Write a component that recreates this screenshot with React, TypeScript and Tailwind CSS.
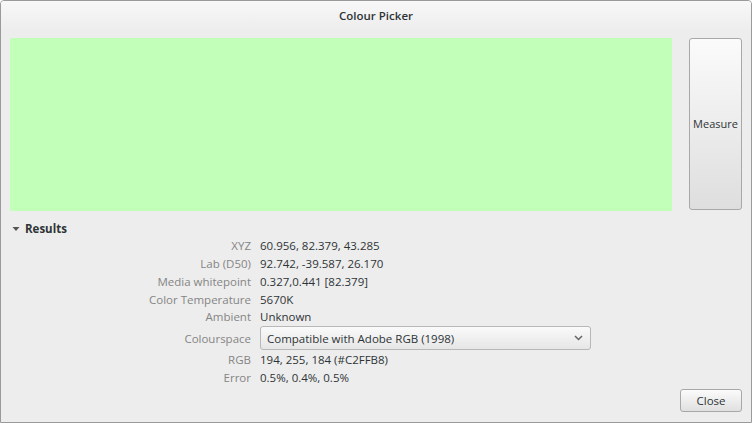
import React from 'react'

const rows: [string, string][] = [
  ['XYZ', '60.956, 82.379, 43.285'],
  ['Lab (D50)', '92.742, -39.587, 26.170'],
  ['Media whitepoint', '0.327,0.441 [82.379]'],
  ['Color Temperature', '5670K'],
  ['Ambient', 'Unknown'],
]

const rows2: [string, string][] = [
  ['RGB', '194, 255, 184 (#C2FFB8)'],
  ['Error', '0.5%, 0.4%, 0.5%'],
]

function Row({ label, value }: { label: string; value: string }) {
  return (
    <div className="flex h-[17.75px] items-center">
      <div className="w-[250px] pr-[9px] text-right text-[#858585]">{label}</div>
      <div className="text-[#2e3436]">{value}</div>
    </div>
  )
}

export default function App() {
  return (
    <div
      className="flex h-[423px] w-[752px] flex-col overflow-hidden rounded-t-[4px] border border-[#9a9a9a] bg-[#ededed] text-[11.5px]"
      style={{ fontFamily: '"Open Sans", "DejaVu Sans", sans-serif' }}
    >
      {/* title bar */}
      <div className="flex h-[29px] shrink-0 items-center justify-center bg-gradient-to-b from-[#f8f8f8] to-[#ededed] text-[11.5px] font-semibold text-[#2e3436]">
        Colour Picker
      </div>

      <div className="flex flex-1 flex-col px-[9px] pt-[8px]">
        <div className="flex h-[173px] gap-[17px]">
          <div className="flex-1 bg-[#c2ffb8]" />
          <button className="flex h-[172px] w-[53px] items-center justify-center rounded-[3px] border border-[#a8a8a8] bg-gradient-to-b from-[#fbfbfb] to-[#dedede] text-[11px] text-[#2e3436]">
            Measure
          </button>
        </div>

        <div className="mt-[10px] flex h-[16px] items-center gap-[5px] pl-[2px] font-bold text-[#2e3436]">
          <svg width="8" height="8" viewBox="0 0 8 8">
            <path d="M0.5 2 L7.5 2 L4 6 Z" fill="#555" />
          </svg>
          Results
        </div>

        <div className="flex flex-col">
          {rows.map(([l, v]) => (
            <Row key={l} label={l} value={v} />
          ))}
          <div className="flex h-[25px] items-center">
            <div className="w-[250px] pr-[9px] text-right text-[#858585]">Colourspace</div>
            <div className="flex h-[24px] w-[331px] items-center justify-between rounded-[3px] border border-[#b8b8b8] bg-gradient-to-b from-[#fafafa] to-[#e6e6e6] pl-[6px] pr-[7px] text-[#2e3436]">
              Compatible with Adobe RGB (1998)
              <svg width="9" height="6" viewBox="0 0 9 6">
                <path d="M1 1 L4.5 4.5 L8 1" stroke="#666" strokeWidth="1.5" fill="none" />
              </svg>
            </div>
          </div>
          {rows2.map(([l, v]) => (
            <Row key={l} label={l} value={v} />
          ))}
        </div>

        <div className="mt-auto mb-[10px] flex justify-end">
          <button className="h-[23px] w-[62px] rounded-[3px] border border-[#a8a8a8] bg-gradient-to-b from-[#fbfbfb] to-[#e0e0e0] text-[#2e3436]">
            Close
          </button>
        </div>
      </div>
    </div>
  )
}
